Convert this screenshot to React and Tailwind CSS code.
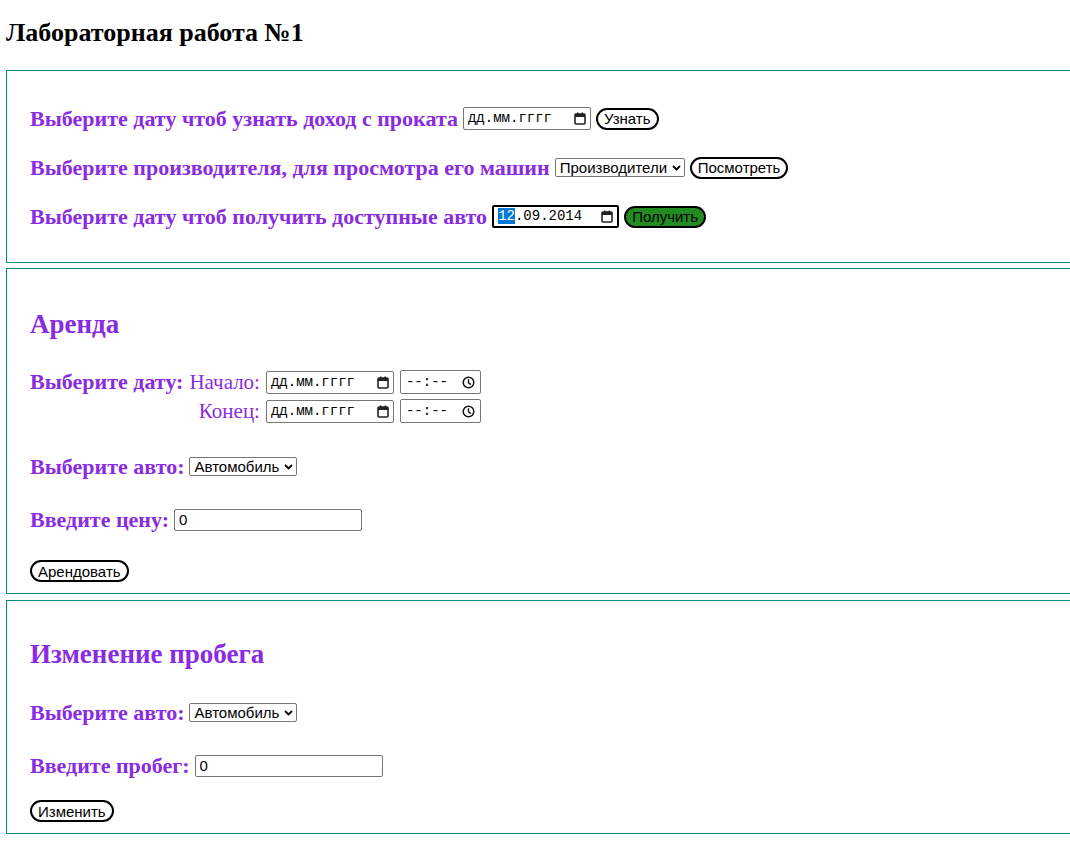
import React from "react";

// ---------- small fake native controls ----------

const CalendarIcon = () => (
  <svg width="12" height="13" viewBox="0 0 12 13" className="shrink-0">
    <rect x="1" y="2" width="10" height="10" rx="1" fill="none" stroke="#222" strokeWidth="1.6" />
    <rect x="1" y="2" width="10" height="3" fill="#222" />
    <rect x="3" y="0.5" width="1.5" height="2" fill="#222" />
    <rect x="7.5" y="0.5" width="1.5" height="2" fill="#222" />
  </svg>
);

const ClockIcon = () => (
  <svg width="13" height="13" viewBox="0 0 13 13" className="shrink-0">
    <circle cx="6.5" cy="6.5" r="5.3" fill="none" stroke="#111" strokeWidth="1.5" />
    <path d="M6.5 3.3 V6.7 L8.8 8.6" fill="none" stroke="#111" strokeWidth="1.4" />
  </svg>
);

const Chevron = () => (
  <svg width="9" height="6" viewBox="0 0 9 6" className="shrink-0">
    <path d="M1 1 L4.5 4.5 L8 1" fill="none" stroke="#000" strokeWidth="1.8" />
  </svg>
);

const DateField = ({ value, focused, w = "w-[128px]" }) => (
  <span
    className={`inline-flex items-center justify-between h-[23px] ${w} px-[4px] rounded-[2px] font-['Liberation_Mono',monospace] text-[14px] text-black
      ${focused ? "border-2 border-black" : "border border-[#767676]"}`}
  >
    {value ? (
      <span>
        <span className="bg-[#0078d7] text-white">12</span>.09.2014
      </span>
    ) : (
      <span>дд.мм.гггг</span>
    )}
    <CalendarIcon />
  </span>
);

const TimeField = () => (
  <span className="inline-flex items-center justify-between h-[24px] w-[81px] px-[5px] rounded-[2px] border border-[#767676] font-['Liberation_Mono',monospace] text-[14px] text-black">
    <span>--:--</span>
    <ClockIcon />
  </span>
);

const SelectField = ({ children, w }) => (
  <span
    className={`inline-flex items-center justify-between h-[19px] ${w} pl-[4px] pr-[3px] rounded-[2px] border border-[#767676] font-['Liberation_Sans',Arial,sans-serif] text-[15px] leading-none text-black`}
  >
    {children}
    <Chevron />
  </span>
);

const Btn = ({ children, green }) => (
  <button
    className={`h-[22px] px-[6px] rounded-full border-2 border-black font-['Liberation_Sans',Arial,sans-serif] text-[15px] text-black leading-none
      ${green ? "bg-[#228b22]" : "bg-white"}`}
  >
    {children}
  </button>
);

const TextField = ({ w }) => (
  <input
    type="text"
    defaultValue="0"
    className={`h-[22px] ${w} px-[4px] rounded-[2px] border border-[#767676] font-['Liberation_Sans',Arial,sans-serif] text-[15px] text-black bg-white outline-none`}
  />
);

const Label = ({ children }) => (
  <span className="font-bold text-[#8a2be2] text-[22px] leading-none">{children}</span>
);

const Panel = ({ children, className = "" }) => (
  <section className={`w-[1080px] border border-[#008b8b] pl-[23px] ${className}`}>
    {children}
  </section>
);

// ---------- MAIN ----------
const App = () => {
  return (
    <div className="min-h-[859px] bg-white px-[6px] font-['Liberation_Serif','Times_New_Roman',serif] overflow-hidden">
      <h1 className="pt-[18px] pb-[22px] text-[26px] font-bold text-black leading-[30px]">
        Лабораторная работа №1
      </h1>

      {/* Статистика */}
      <Panel className="pt-[36px] pb-[34px] flex flex-col gap-[26px]">
        <div className="flex items-center gap-[5px] h-[23px]">
          <Label>Выберите дату чтоб узнать доход с проката</Label>
          <DateField />
          <Btn>Узнать</Btn>
        </div>
        <div className="flex items-center gap-[5px] h-[23px]">
          <Label>Выберите производителя, для просмотра его машин</Label>
          <SelectField w="w-[130px]">Производители</SelectField>
          <Btn>Посмотреть</Btn>
        </div>
        <div className="flex items-center gap-[5px] h-[23px]">
          <Label>Выберите дату чтоб получить доступные авто</Label>
          <DateField value focused w="w-[127px]" />
          <Btn green>Получить</Btn>
        </div>
      </Panel>

      {/* Аренда */}
      <Panel className="mt-[5px] pt-[39px] pb-[11px]">
        <h2 className="text-[27px] font-bold text-[#8a2be2] leading-[32px]">Аренда</h2>

        <div className="mt-[30px] grid grid-cols-[auto_auto_auto_auto] w-max gap-x-[6px] gap-y-[5px] items-center text-[#8a2be2]">
          <span className="font-bold text-[22px] leading-none">Выберите дату:</span>
          <span className="text-right text-[21px] leading-none">Начало:</span>
          <DateField />
          <TimeField />
          <span />
          <span className="text-right text-[21px] leading-none">Конец:</span>
          <DateField />
          <TimeField />
        </div>

        <div className="mt-[34px] flex items-center gap-[5px] h-[19px]">
          <Label>Выберите авто:</Label>
          <SelectField w="w-[108px]">Автомобиль</SelectField>
        </div>

        <div className="mt-[33px] flex items-center gap-[5px] h-[22px]">
          <Label>Введите цену:</Label>
          <TextField w="w-[188px]" />
        </div>

        <div className="mt-[29px] flex">
          <Btn>Арендовать</Btn>
        </div>
      </Panel>

      {/* Пробег */}
      <Panel className="mt-[6px] pt-[37px] pb-[11px]">
        <h2 className="text-[27px] font-bold text-[#8a2be2] leading-[32px]">Изменение пробега</h2>

        <div className="mt-[33px] flex items-center gap-[5px] h-[19px]">
          <Label>Выберите авто:</Label>
          <SelectField w="w-[108px]">Автомобиль</SelectField>
        </div>

        <div className="mt-[33px] flex items-center gap-[5px] h-[22px]">
          <Label>Введите пробег:</Label>
          <TextField w="w-[188px]" />
        </div>

        <div className="mt-[23px] flex">
          <Btn>Изменить</Btn>
        </div>
      </Panel>
    </div>
  );
};

export default App;
